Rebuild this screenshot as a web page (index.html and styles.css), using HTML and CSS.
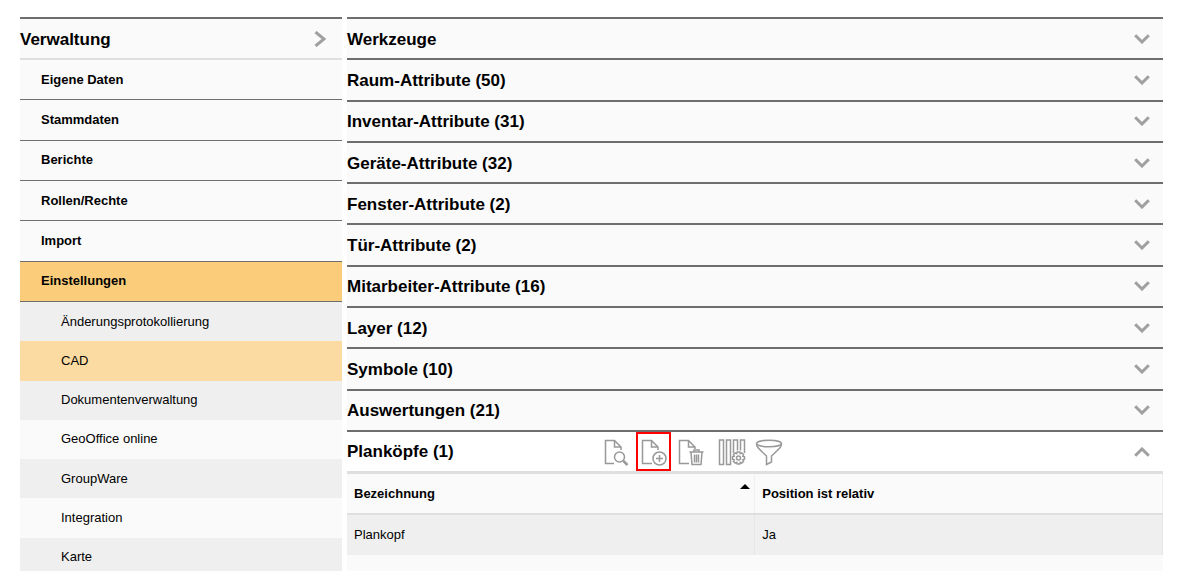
FILE: index.html
```html
<!DOCTYPE html>
<html lang="de">
<head>
<meta charset="utf-8">
<title>Verwaltung</title>
<link rel="stylesheet" href="styles.css">
</head>
<body>
<svg class="defs" aria-hidden="true">
  <symbol id="chevron-down" viewBox="0 0 16 10"><path d="M1.200 1.200 8 8 14.800 1.200"/></symbol>
  <symbol id="chevron-up" viewBox="0 0 16 10"><path d="M1.200 8.800 8 2 14.800 8.800"/></symbol>
</svg>
<div class="layout">
  <nav class="sidebar" aria-label="Verwaltung">
    <button class="sidebar-head" type="button"><span class="label">Verwaltung</span>
      <svg class="chevron-right" viewBox="0 0 12 16"><path d="M1.500 1 10 8 1.500 15"/></svg></button>
    <ul class="menu">
      <li><a href="#">Eigene Daten</a></li>
      <li><a href="#">Stammdaten</a></li>
      <li><a href="#">Berichte</a></li>
      <li><a href="#">Rollen/Rechte</a></li>
      <li><a href="#">Import</a></li>
      <li><a class="active" href="#">Einstellungen</a></li>
    </ul>
    <ul class="submenu">
      <li><a href="#">Änderungsprotokollierung</a></li>
      <li><a class="active" href="#">CAD</a></li>
      <li><a href="#">Dokumentenverwaltung</a></li>
      <li><a href="#">GeoOffice online</a></li>
      <li><a href="#">GroupWare</a></li>
      <li><a href="#">Integration</a></li>
      <li><a href="#">Karte</a></li>
    </ul>
  </nav>
  <main class="content">
    <div class="sections">
      <button class="section" type="button"><span class="label">Werkzeuge</span><svg class="chevron"><use href="#chevron-down"/></svg></button>
      <button class="section" type="button"><span class="label">Raum-Attribute (50)</span><svg class="chevron"><use href="#chevron-down"/></svg></button>
      <button class="section" type="button"><span class="label">Inventar-Attribute (31)</span><svg class="chevron"><use href="#chevron-down"/></svg></button>
      <button class="section" type="button"><span class="label">Geräte-Attribute (32)</span><svg class="chevron"><use href="#chevron-down"/></svg></button>
      <button class="section" type="button"><span class="label">Fenster-Attribute (2)</span><svg class="chevron"><use href="#chevron-down"/></svg></button>
      <button class="section" type="button"><span class="label">Tür-Attribute (2)</span><svg class="chevron"><use href="#chevron-down"/></svg></button>
      <button class="section" type="button"><span class="label">Mitarbeiter-Attribute (16)</span><svg class="chevron"><use href="#chevron-down"/></svg></button>
      <button class="section" type="button"><span class="label">Layer (12)</span><svg class="chevron"><use href="#chevron-down"/></svg></button>
      <button class="section" type="button"><span class="label">Symbole (10)</span><svg class="chevron"><use href="#chevron-down"/></svg></button>
      <button class="section" type="button"><span class="label">Auswertungen (21)</span><svg class="chevron"><use href="#chevron-down"/></svg></button>
    </div>
    <div class="open-section">
      <h2 class="open-title">Planköpfe (1)</h2>
      <div class="toolbar">
        <div class="tool-group">
          <button class="tool" type="button" aria-label="Anzeigen">
            <svg class="icon" viewBox="0 0 26 28"><path d="M10 25.500H1.500V2.500H10.500L17 9V12M10.500 2.500V9H17"/><circle cx="15.500" cy="19" r="5"/><path class="thick" d="M19.300 22.800 23.500 27"/></svg></button>
          <button class="tool highlighted" type="button" aria-label="Neu">
            <svg class="icon" viewBox="0 0 26 28"><path d="M11 25.500H1.500V2.500H10.500L17 9V12M10.500 2.500V9H17"/><circle cx="18.500" cy="20.500" r="6.500"/><path d="M18.500 17V24M15 20.500H22"/></svg></button>
          <button class="tool" type="button" aria-label="Löschen">
            <svg class="icon" viewBox="0 0 26 28"><path d="M11 25.500H1.500V2.500H10.500L17 9V11M10.500 2.500V9H17"/><path d="M11.500 14H25.500M16 13.500V12H21V13.500M13 14.500 14 26.500H23L24 14.500M16.500 16.500V24.500M18.500 16.500V24.500M20.500 16.500V24.500"/></svg></button>
        </div>
        <div class="tool-group">
          <button class="tool" type="button" aria-label="Spalten einstellen">
            <svg class="icon icon-wide" viewBox="0 0 28 28"><path d="M1.500 2H5.500V26.500H1.500ZM8.500 2H12.500V26.500H8.500ZM15.500 15V2H19.500V12.500M22.500 12.500V2H26.500V15"/><path d="M19.200 14H21.800L22.300 15.700 23.800 14.900 25.600 16.700 24.800 18.200 26.500 18.700V21.300L24.800 21.800 25.600 23.300 23.800 25.100 22.300 24.300 21.800 26H19.200L18.700 24.300 17.200 25.100 15.400 23.300 16.200 21.800 14.500 21.300V18.700L16.200 18.200 15.400 16.700 17.200 14.900 18.700 15.700Z"/><circle cx="20.500" cy="20" r="2"/></svg></button>
          <button class="tool" type="button" aria-label="Filtern">
            <svg class="icon icon-wide" viewBox="0 0 28 28"><ellipse cx="14" cy="5.500" rx="12.500" ry="3.300"/><path d="M1.500 5.500C1.500 9 3 10 11.500 18V26.500L16.500 24V18C25 10 26.500 9 26.500 5.500"/></svg></button>
        </div>
      </div>
      <button class="collapse" type="button" aria-label="Einklappen"><svg class="chevron"><use href="#chevron-up"/></svg></button>
    </div>
    <table class="grid">
      <thead><tr>
        <th><div class="sortable">Bezeichnung<svg class="sort-mark" viewBox="0 0 10 5"><path d="M0 5 5 0 10 5Z"/></svg></div></th>
        <th>Position ist relativ</th>
      </tr></thead>
      <tbody><tr><td>Plankopf</td><td>Ja</td></tr></tbody>
    </table>
  </main>
</div>
</body>
</html>
```
FILE: styles.css
```css
* { box-sizing: border-box; }
body {
  margin: 0;
  background: #fff;
  color: #000;
  font: 13px/16px "Liberation Sans", Arial, sans-serif;
}
button { font: inherit; color: inherit; border: 0; padding: 0; background: none; text-align: left; }
ul { list-style: none; margin: 0; padding: 0; }
a { color: inherit; text-decoration: none; }
.defs { display: none; }

.layout {
  display: flex;
  gap: 5px;
  height: 100vh;
  padding: 17px 20px 0;
  overflow: hidden;
}

.sidebar { flex: 0 0 322px; background: #fafafa; }
.sidebar-head {
  display: flex;
  align-items: center;
  justify-content: space-between;
  width: 100%;
  height: 43px;
  padding-right: 16px;
  border-top: 2px solid #6e6e6e;
  border-bottom: 2px solid #dfdfdf;
  font-size: 17px;
  line-height: 20px;
  font-weight: bold;
}
.label { padding-top: 2px; }
.menu { display: grid; grid-auto-rows: 1fr; min-height: 242px; font-weight: bold; }
.submenu { display: grid; grid-auto-rows: 1fr; min-height: 275px; }
.menu a, .submenu a { display: flex; align-items: center; height: 100%; }
.menu a { padding-left: 21px; border-bottom: 1px solid #6e6e6e; }
.menu .active { background: #fbcd7a; }
.submenu a { padding-left: 41px; }
.submenu li:nth-child(odd) { background: #efefef; }
.submenu .active { background: #fcdba2; }

.content { flex: 1; min-width: 0; background: #fafafa; }
.sections { display: grid; grid-auto-rows: 1fr; min-height: 413px; }
.section {
  display: flex;
  align-items: center;
  justify-content: space-between;
  padding-right: 13px;
  border-top: 2px solid #6e6e6e;
  font-size: 17px;
  line-height: 20px;
  font-weight: bold;
}
.chevron, .chevron-right { display: block; fill: none; stroke: #a0a0a0; stroke-width: 3; }
.chevron { width: 16px; height: 10px; }
.chevron-right { width: 12px; height: 16px; }

.open-section {
  display: flex;
  align-items: center;
  height: 44px;
  padding-right: 13px;
  border-top: 2px solid #6e6e6e;
  border-bottom: 3px solid #dfdfdf;
  background: #fff;
}
.open-title { flex: 0 0 252px; margin: 0; font-size: 17px; line-height: 20px; }
.toolbar { display: flex; flex: 1; gap: 6px; }
.tool-group { display: flex; gap: 2px; }
.tool { display: grid; place-items: center; width: 35px; height: 39px; }
.highlighted { border: 2px solid #f00; }
.icon { width: 26px; height: 28px; fill: none; stroke: #999; stroke-width: 1.5; }
.icon-wide { width: 28px; }
.thick { stroke-width: 2.5; }

.grid { width: 100%; border-collapse: collapse; table-layout: fixed; }
.grid th, .grid td { padding: 0 7px; text-align: left; border-right: 1px solid #e6e6e6; }
.grid th { height: 40px; border-color: #f0f0f0; border-bottom: 2px solid #dfdfdf; }
.grid td { height: 41px; background: #efefef; }
.sortable { display: flex; justify-content: space-between; align-items: flex-start; }
.sort-mark { width: 10px; height: 5px; margin-right: -3px; margin-top: -2px; }
```
